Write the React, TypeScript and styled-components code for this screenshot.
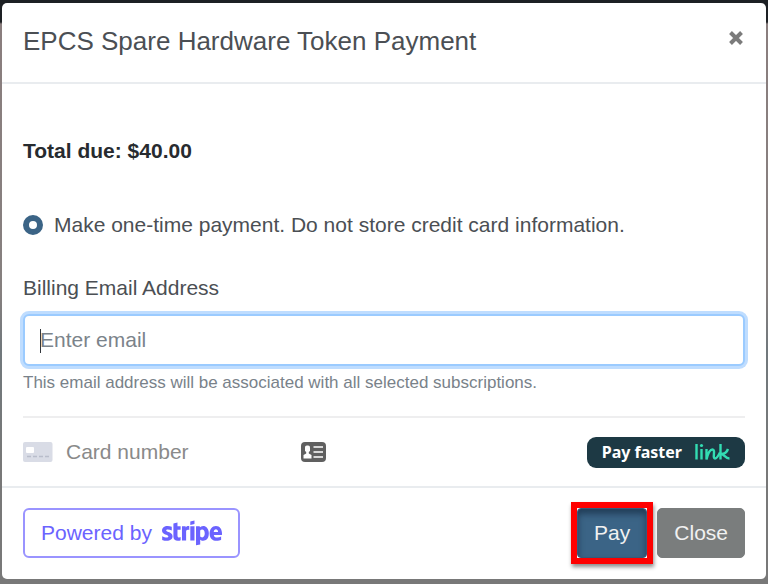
import React from "react";
import styled, { createGlobalStyle, css } from "styled-components";
import { FaStripe } from "react-icons/fa";

const GlobalStyle = createGlobalStyle`
  *, *::before, *::after { box-sizing: border-box; }
  body {
    margin: 0;
    font-family: "Liberation Sans", Arial, sans-serif;
    font-size: 21px;
    line-height: 32px;
    color: #4b4f54;
  }
`;

const Backdrop = styled.div`
  min-height: 100vh;
  padding: 3px 2px 5px;
  background: linear-gradient(#1d2024 0, #1d2024 22px, #8a7e7e 24px, #86807f 50%, #71787c 60%, #787878 80%, #787878 100%);
`;

const Dialog = styled.section`
  background: #fff;
  border-radius: 5px;
`;

const Header = styled.header`
  display: flex;
  justify-content: space-between;
  align-items: flex-start;
  padding: 20px 21px 23px;
  border-bottom: 2px solid #e9ecef;
`;

const Title = styled.h1`
  margin: 0;
  font-size: 26px;
  line-height: 36px;
  font-weight: 400;
`;

const CloseIconButton = styled.button`
  display: flex;
  padding: 8px 0;
  border: 0;
  background: none;
  color: #7b7b7b;
`;

const Body = styled.div`
  padding: 51px 21px 0;
`;

const Total = styled.p`
  margin: 0 0 42px;
  font-weight: 700;
  color: #272b2f;
`;

const Choice = styled.label`
  display: flex;
  align-items: center;
  gap: 11px;
  margin-bottom: 31px;
`;

const Radio = styled.input`
  appearance: none;
  width: 20px;
  height: 20px;
  margin: 0;
  border: 6px solid #3b6486;
  border-radius: 50%;
  background: #fff;
`;

const FieldLabel = styled.label`
  display: block;
  margin-bottom: 10px;
`;

const Field = styled.div`
  position: relative;

  &::after {
    content: "";
    position: absolute;
    left: 17px;
    top: 15px;
    width: 1px;
    height: 24px;
    background: #33373c;
  }
`;

const EmailInput = styled.input`
  display: block;
  width: 100%;
  height: 52px;
  padding: 0 15px;
  border: 2px solid #9bcbff;
  border-radius: 6px;
  outline: 0;
  box-shadow: 0 0 0 3px #bfddff;
  font: inherit;
  color: #4b4f54;

  &::placeholder { color: #7b838a; opacity: 1; }
`;

const Hint = styled.small`
  display: block;
  margin-top: 5px;
  font-size: 17px;
  line-height: 24px;
  color: #79828a;
`;

const Divider = styled.hr`
  height: 2px;
  margin: 21px 0 0;
  border: 0;
  background: #eeeeef;
`;

const CardRow = styled.div`
  display: flex;
  align-items: center;
  height: 68px;
`;

const CardInput = styled.input`
  width: 220px;
  margin: 0 15px 0 13px;
  padding: 0;
  border: 0;
  outline: 0;
  background: none;
  font: inherit;

  &::placeholder { color: #8a8a8a; opacity: 1; }
`;

const LinkButton = styled.button`
  display: flex;
  align-items: center;
  gap: 13px;
  height: 31px;
  margin-left: auto;
  padding: 0 15px;
  border: 0;
  border-radius: 9px;
  background: #1d3944;
  color: #fff;
  font: 700 16px/24px "Noto Sans", sans-serif;
`;

const Footer = styled.footer`
  display: flex;
  align-items: center;
  gap: 4px;
  padding: 14px 21px 15px;
  border-top: 2px solid #e9ecef;
`;

const StripeLink = styled.a`
  display: flex;
  align-items: center;
  gap: 10px;
  height: 50px;
  margin-right: auto;
  padding: 0 16px;
  border: 2px solid #9a94ff;
  border-radius: 6px;
  color: #6b63ff;
  text-decoration: none;
`;

const StripeMark = styled(FaStripe)`
  width: 60px;
  height: 48px;
`;

const Highlight = styled.div`
  border: 6px solid #fe0000;
  box-shadow: 1px 3px 4px rgba(0, 0, 0, 0.45);
`;

const ActionButton = styled.button<{ $primary?: boolean }>`
  display: block;
  height: 50px;
  padding: 0 16px;
  border: 1px solid #7a7d7d;
  border-radius: 5px;
  background: #7a7d7d;
  color: #f1f1f1;
  font: inherit;

  ${(p) =>
    p.$primary &&
    css`
      border-color: #36597a;
      border-radius: 4px;
      background: #3b6486;
      box-shadow: inset 0 5px 6px rgba(10, 25, 45, 0.5);
    `}
`;

const CrossIcon = () => (
  <svg width="16" height="16" viewBox="0 0 16 16" aria-hidden="true">
    <path d="M1.500 1.500l11 11M12.500 1.500l-11 11" stroke="currentColor" strokeWidth="4" />
  </svg>
);

const CardIcon = () => (
  <svg width="30" height="20" viewBox="0 0 30 20" aria-hidden="true">
    <rect width="29.500" height="20" rx="2" fill="#d9dce6" />
    <rect x="3" y="5" width="8" height="6" rx="1" fill="#fff" />
    <path d="M4 14.500h23" stroke="#b9bdcb" strokeWidth="1.600" strokeDasharray="4 2" />
  </svg>
);

const ContactCardIcon = () => (
  <svg width="25" height="20" viewBox="0 0 25 20" aria-hidden="true">
    <rect width="25" height="20" rx="4" fill="#606060" />
    <rect x="4" y="3.500" width="5" height="6.500" rx="1.800" fill="#fff" />
    <path d="M5.200 9h2.600v2.500l2.700 1.500v3.500h-8V13l2.700-1.500z" fill="#fff" />
    <path d="M12.500 5H22M12.500 10H22M12.500 15H22" stroke="#d8d8d8" strokeWidth="2" />
  </svg>
);

const LinkLogo = () => (
  <svg width="35" height="18" viewBox="0 0 35 18" role="img" aria-label="link">
    <g fill="none" stroke="#33ddb3" strokeWidth="2.400">
      <path d="M1.500 1v15.500" />
      <path d="M6.500 6v10.500" />
      <path d="M11.500 6v10.500C13 10 15.500 6.500 17.500 6.500c3.500 0-.5 9 2.500 9 2 0 3.500-3 5-6" />
      <path d="M25.500 1v15.500M33 6c-1 3-4 5-7 5 3-.5 4 4.500 8.500 4.500" />
    </g>
    <circle cx="6.500" cy="2.500" r="1.600" fill="#33ddb3" />
  </svg>
);

export default function App() {
  return (
    <>
      <GlobalStyle />
      <Backdrop>
        <Dialog role="dialog" aria-labelledby="payment-title">
          <Header>
            <Title id="payment-title">EPCS Spare Hardware Token Payment</Title>
            <CloseIconButton type="button" aria-label="Close dialog">
              <CrossIcon />
            </CloseIconButton>
          </Header>
          <Body>
            <Total>Total due: $40.00</Total>
            <Choice>
              <Radio type="radio" name="payment" defaultChecked />
              Make one-time payment. Do not store credit card information.
            </Choice>
            <FieldLabel htmlFor="email">Billing Email Address</FieldLabel>
            <Field>
              <EmailInput id="email" type="email" placeholder="Enter email" aria-describedby="email-hint" />
            </Field>
            <Hint id="email-hint">This email address will be associated with all selected subscriptions.</Hint>
            <Divider />
            <CardRow>
              <CardIcon />
              <CardInput aria-label="Card number" placeholder="Card number" inputMode="numeric" />
              <ContactCardIcon />
              <LinkButton type="button">
                Pay faster
                <LinkLogo />
              </LinkButton>
            </CardRow>
          </Body>
          <Footer>
            <StripeLink href="#stripe">
              Powered by
              <StripeMark role="img" aria-label="stripe" />
            </StripeLink>
            <Highlight>
              <ActionButton type="button" $primary>Pay</ActionButton>
            </Highlight>
            <ActionButton type="button">Close</ActionButton>
          </Footer>
        </Dialog>
      </Backdrop>
    </>
  );
}
